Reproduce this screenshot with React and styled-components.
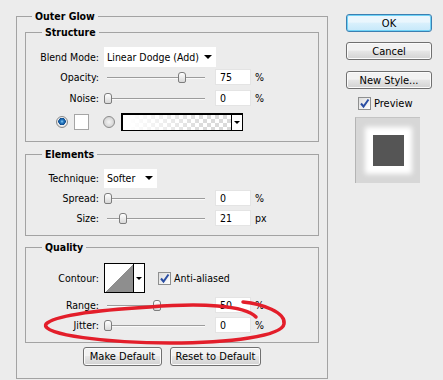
import React from 'react';
import styled, { createGlobalStyle } from 'styled-components';

const GlobalStyle = createGlobalStyle`
  html, body {
    margin: 0;
    padding: 0;
    background: #ececec;
    overflow: hidden;
  }
  body {
    font-family: "DejaVu Sans Condensed", "Liberation Sans", sans-serif;
    font-size: 10.5px;
    color: #000;
  }
`;

const Dialog = styled.div`
  position: relative;
  display: flex;
  align-items: flex-start;
  height: 380px;
  overflow: hidden;
  box-sizing: border-box;
  padding: 10px 0 0 16px;
`;

const Group = styled.fieldset`
  margin: ${p => p.$mt || 0}px 0 0;
  padding: ${p => p.$pt || 0}px ${p => p.$px || 0}px ${p => p.$pb || 0}px;
  border: 1px solid #a3a3a3;
  min-width: 0;
  width: ${p => (p.$w ? p.$w + 'px' : 'auto')};
  box-sizing: border-box;
`;

const Title = styled.legend`
  font-weight: bold;
  line-height: 12px;
  padding: 0 3px;
  margin-left: ${p => p.$ml || 0}px;
`;

const Row = styled.div`
  display: flex;
  align-items: center;
  height: ${p => p.$h || 20}px;
  margin-top: ${p => p.$mt || 0}px;
  padding-left: ${p => p.$pl || 0}px;
`;

const Label = styled.span`
  flex: none;
  width: 73px;
  margin-right: 5px;
  text-align: right;
`;

const Select = styled.div`
  display: flex;
  align-items: center;
  width: ${p => p.$w}px;
  height: ${p => p.$h || 20}px;
  padding-left: 3px;
  box-sizing: border-box;
  background: #fff;
  white-space: nowrap;
`;

const Arrow = styled.span`
  margin-left: auto;
  margin-right: ${p => p.$mr || 4}px;
  border-left: 4px solid transparent;
  border-right: 4px solid transparent;
  border-top: 4px solid #000;
`;

const Track = styled.div`
  position: relative;
  flex: none;
  width: 104px;
  height: 20px;
  margin-right: 7px;
  &::before {
    content: '';
    position: absolute;
    left: 3px;
    right: 3px;
    top: 10px;
    height: 1px;
    background: #9c9c9c;
    box-shadow: 0 1px 0 #fafafa;
  }
`;

const Thumb = styled.span`
  position: absolute;
  top: 5px;
  width: 8px;
  height: 11px;
  margin-left: -4px;
  box-sizing: border-box;
  border: 1px solid #7d7d7d;
  border-radius: 3px 3px 2px 2px;
  background: linear-gradient(#ffffff, #d8d8d8);
`;

const NumBox = styled.div`
  flex: none;
  width: 36px;
  height: 16px;
  box-sizing: border-box;
  padding-left: 4px;
  line-height: 15px;
  background: #fff;
  border: 1px solid #e4e4e4;
`;

const Unit = styled.span`
  margin-left: 4px;
`;

const Radio = styled.span`
  flex: none;
  width: 12px;
  height: 12px;
  margin-left: ${p => p.$ml || 0}px;
  box-sizing: border-box;
  border-radius: 50%;
  border: 1px solid #8a8a8a;
  background: ${p =>
    p.$on
      ? 'radial-gradient(circle at 50% 45%, #8fd0f5 0, #2b7fc6 1.5px, #0c4a8e 3.5px, #f2f2f2 4px, #d6d6d6 6px)'
      : 'radial-gradient(circle at 50% 50%, #f4f4f4 0, #d4d4d4 5px)'};
`;

const Swatch = styled.span`
  flex: none;
  width: 15px;
  height: 16px;
  margin-left: 6px;
  box-sizing: border-box;
  border: 1px solid #a5a5a5;
  background: #fff;
`;

const GradientPicker = styled.div`
  display: flex;
  width: 122px;
  height: 18px;
  margin-left: 6px;
  box-sizing: border-box;
  border: 1px solid #000;
  border-top-width: 2px;
  border-left-width: 2px;
`;

const GradientFill = styled.span`
  flex: 1;
  background:
    linear-gradient(to right, #fff 5%, rgba(255, 255, 255, 0) 75%),
    repeating-conic-gradient(#dadada 0 25%, #fff 0 50%) 0 0 / 8px 8px;
`;

const PickerArrow = styled.span`
  flex: none;
  display: grid;
  place-items: center;
  width: 10px;
  border-left: 1px solid #000;
  background: #fff;
  &::after {
    content: '';
    border-left: 3px solid transparent;
    border-right: 3px solid transparent;
    border-top: 3px solid #000;
  }
`;

const Contour = styled(GradientPicker)`
  width: 41px;
  height: 30px;
  margin-left: 0;
  border-width: 1px;
`;

const ContourCurve = styled.span`
  flex: 1;
  background: linear-gradient(to bottom right, #fff 50%, #8e8e8e 50%);
`;

const CheckBox = styled.span`
  flex: none;
  display: grid;
  place-items: center;
  width: 13px;
  height: 13px;
  margin-left: ${p => p.$ml || 0}px;
  box-sizing: border-box;
  border: 1px solid #8e8f8f;
  background: linear-gradient(135deg, #dcdcdc, #fff);
`;

const CheckText = styled.span`
  margin-left: ${p => p.$ml || 3}px;
`;

const ButtonRow = styled.div`
  display: flex;
  justify-content: center;
  gap: 8px;
  margin-top: 4px;
`;

const Button = styled.button`
  flex: none;
  width: ${p => p.$w}px;
  height: ${p => p.$h || 18}px;
  margin-top: ${p => p.$mt || 0}px;
  padding: 0;
  font: inherit;
  font-size: 11px;
  color: #000;
  border: 1px solid ${p => (p.$default ? '#3c7fb1' : '#707070')};
  border-radius: 3px;
  box-shadow: ${p => (p.$default ? 'inset 0 0 0 1px #6fd3f7' : 'inset 0 0 0 1px #fbfbfb')};
  background: ${p =>
    p.$default
      ? 'linear-gradient(#eaf6fd 0 45%, #d9f0fc 50%, #c6e8fa)'
      : 'linear-gradient(#f2f2f2 0 45%, #e6e6e6 50%, #d2d2d2)'};
`;

const Side = styled.div`
  display: flex;
  flex-direction: column;
  margin: 4px 0 0 18px;
`;

const PreviewToggle = styled.div`
  display: flex;
  align-items: center;
  height: 13px;
  margin-top: 8px;
  padding-left: 12px;
  font-size: 11px;
`;

const PreviewBox = styled.div`
  display: grid;
  place-items: center;
  width: 65px;
  height: 66px;
  margin: 7px 0 0 9px;
  box-sizing: border-box;
  background: #d7d7d7;
  border-left: 1px solid #b4b4b4;
  border-top: 1px solid #c4c4c4;
`;

const PreviewShape = styled.span`
  width: 31px;
  height: 31px;
  background: #555;
  box-shadow: 0 0 5px 8px #fff;
`;

const Annotation = styled.svg`
  position: absolute;
  left: 0;
  top: 0;
  pointer-events: none;
`;

const Check = () => (
  <svg width="11" height="11" viewBox="0 0 11 11">
    <path d="M2 5.5 L4.5 8.5 L9.5 1.5" fill="none" stroke="#2a4ea3" strokeWidth="2" />
  </svg>
);

const SliderRow = ({ label, value, pos, unit = '%', mt }) => (
  <Row $mt={mt}>
    <Label>{label}</Label>
    <Track>
      <Thumb style={{ left: 4 + pos * 98 }} />
    </Track>
    <NumBox>{value}</NumBox>
    <Unit>{unit}</Unit>
  </Row>
);

export default function App() {
  return (
    <>
      <GlobalStyle />
      <Dialog>
        <Group $w={312} $pt={4} $px={8} $pb={12}>
          <Title $ml={7}>Outer Glow</Title>

          <Group $pt={9} $pb={9}>
            <Title $ml={16}>Structure</Title>
            <Row>
              <Label>Blend Mode:</Label>
              <Select $w={112}>
                Linear Dodge (Add)
                <Arrow $mr={4} />
              </Select>
            </Row>
            <SliderRow label="Opacity:" value="75" pos={0.75} />
            <SliderRow label="Noise:" value="0" pos={0} mt={1} />
            <Row $mt={4} $pl={30}>
              <Radio $on />
              <Swatch />
              <Radio $ml={14} />
              <GradientPicker>
                <GradientFill />
                <PickerArrow />
              </GradientPicker>
            </Row>
          </Group>

          <Group $mt={6} $pt={8} $pb={7}>
            <Title $ml={16}>Elements</Title>
            <Row>
              <Label>Technique:</Label>
              <Select $w={53} $h={19}>
                Softer
                <Arrow $mr={4} />
              </Select>
            </Row>
            <SliderRow label="Spread:" value="0" pos={0} />
            <SliderRow label="Size:" value="21" pos={0.15} unit="px" />
          </Group>

          <Group $mt={5} $pt={10} $pb={7}>
            <Title $ml={16}>Quality</Title>
            <Row $h={30}>
              <Label>Contour:</Label>
              <Contour>
                <ContourCurve />
                <PickerArrow />
              </Contour>
              <CheckBox $ml={13}>
                <Check />
              </CheckBox>
              <CheckText $ml={3}>Anti-aliased</CheckText>
            </Row>
            <SliderRow label="Range:" value="50" pos={0.5} mt={2} />
            <SliderRow label="Jitter:" value="0" pos={0} />
          </Group>

          <ButtonRow>
            <Button $w={79} $h={19}>Make Default</Button>
            <Button $w={91} $h={19}>Reset to Default</Button>
          </ButtonRow>
        </Group>

        <Side>
          <Button $w={86} $default>OK</Button>
          <Button $w={86} $mt={10}>Cancel</Button>
          <Button $w={86} $mt={11}>New Style...</Button>
          <PreviewToggle>
            <CheckBox>
              <Check />
            </CheckBox>
            <CheckText>Preview</CheckText>
          </PreviewToggle>
          <PreviewBox>
            <PreviewShape />
          </PreviewBox>
        </Side>

        <Annotation width="443" height="380" viewBox="0 0 443 380">
          <path
            d="M256 317 C245 305 200 303 150 307 C100 310 55 315 46 324 C40 335 110 343 170 343 C230 343 282 336 284 324 C286 312 262 304 243 302"
            fill="none"
            stroke="#e31e2a"
            strokeWidth="3.5"
            strokeLinecap="round"
          />
        </Annotation>
      </Dialog>
    </>
  );
}
